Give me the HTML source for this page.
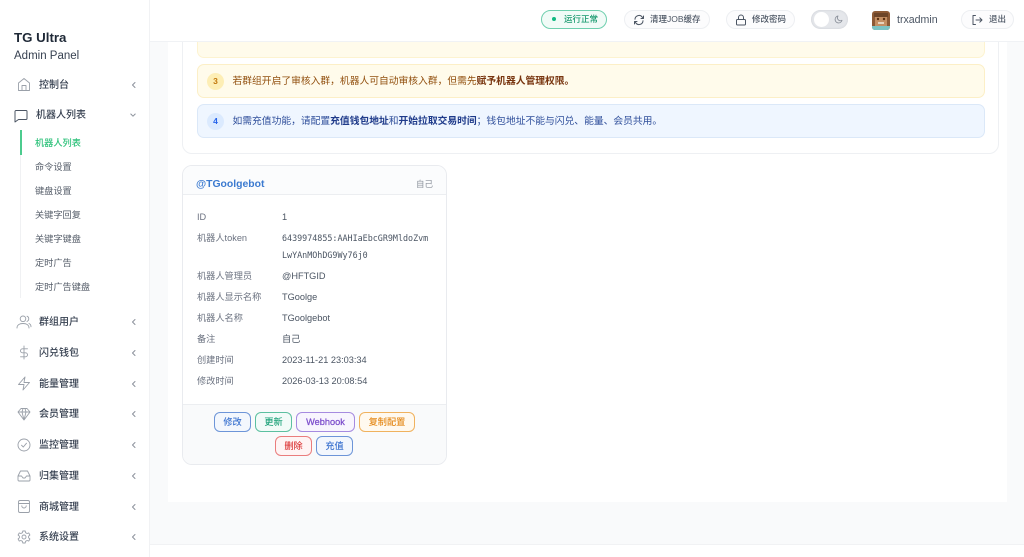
<!DOCTYPE html>
<html lang="zh"><head><meta charset="utf-8"><title>TG Ultra Admin Panel</title>
<style>
*{box-sizing:border-box}
html,body{margin:0;padding:0;width:1024px;height:557px;overflow:hidden;background:#f9fafb}
body{position:relative;font-family:"Liberation Sans","Noto Sans CJK SC",sans-serif;color:#374151;filter:blur(.3px)}
.a{position:absolute;white-space:nowrap}
svg{position:absolute;fill:none;stroke-linecap:round;stroke-linejoin:round}
.m{position:absolute;left:39px;font-size:10px;font-weight:500;color:#374151;line-height:14px;white-space:nowrap}
.s{position:absolute;left:35px;font-size:9.2px;color:#555d69;line-height:14px;white-space:nowrap}
.ch{position:absolute;left:131px;width:6px;height:8px}
.pill{position:absolute;top:10px;height:19px;border:1px solid #edeff2;border-radius:10px;background:#fcfcfd;font-size:8.5px;font-weight:500;color:#4b5563;line-height:17px;white-space:nowrap}
.k{position:absolute;left:197px;font-size:9.2px;color:#6b7280;line-height:14px;white-space:nowrap}
.v{position:absolute;left:282px;font-size:9.2px;color:#4b5563;line-height:14px;white-space:nowrap}
.t{font-family:"DejaVu Sans Mono",monospace;font-size:8.4px}
.b{position:absolute;height:20px;border-radius:6px;border:1.3px solid;font-size:9.2px;font-weight:500;line-height:18.5px;text-align:center;white-space:nowrap}
.note{position:absolute;left:197px;width:788px;height:34px;border-radius:7px;font-size:9.78px;line-height:34px;white-space:nowrap;padding-left:34.5px}
.n{position:absolute;left:9px;top:8px;width:17px;height:17px;border-radius:50%;font-size:8.5px;font-weight:700;line-height:17px;text-align:center}
</style></head><body>

<!-- main surfaces -->
<div class="a" style="left:168px;top:42px;width:839px;height:460px;background:#fff"></div>
<div class="a" style="left:182px;top:30px;width:817px;height:124px;background:#fff;border:1px solid #eef0f3;border-radius:10px"></div>
<div class="a" style="left:197px;top:30px;width:788px;height:28px;background:#fffbeb;border:1px solid #fdf3d0;border-radius:7px"></div>
<div class="a" style="left:150px;top:544px;width:874px;height:13px;background:#fff;border-top:1px solid #f1f2f4"></div>

<!-- notes -->
<div class="note" style="top:64px;background:#fffbeb;border:1px solid #fcefc7;color:#92500f">
<span class="n" style="background:#fdeeb5;color:#c2780c">3</span>若群组开启了审核入群，机器人可自动审核入群，但需先<b style="color:#78350f">赋予机器人管理权限。</b></div>
<div class="note" style="top:104px;background:#eff6ff;border:1px solid #dbe8f8;color:#2f4f9b">
<span class="n" style="background:#dbeafe;color:#2563eb">4</span>如需充值功能，请配置<b style="color:#1e3a8a">充值钱包地址</b>和<b style="color:#1e3a8a">开始拉取交易时间</b>；钱包地址不能与闪兑、能量、会员共用。</div>

<!-- header -->
<div class="a" style="left:150px;top:0;width:874px;height:42px;background:#fff;border-bottom:1px solid #f0f2f5"></div>
<div class="pill" style="left:541px;width:66px;border-color:#6fcfae;background:#f1fbf7;color:#15986c;padding-left:22px"><span class="a" style="left:10px;top:6px;width:4px;height:4px;border-radius:50%;background:#10b981"></span>运行正常</div>
<div class="pill" style="left:624px;width:86px;padding-left:25px">清理JOB缓存
<svg style="left:8px;top:3px" width="12" height="12" viewBox="0 0 12 12" stroke="#4b5563" stroke-width="1"><path d="M2 5.2A4 4 0 0 1 9.3 3.2L10.5 4.5M10.5 2v2.5H8M10 6.8A4 4 0 0 1 2.7 8.8L1.5 7.5M1.5 10V7.5H4"/></svg></div>
<div class="pill" style="left:726px;width:69px;padding-left:25px">修改密码
<svg style="left:8px;top:3px" width="12" height="12" viewBox="0 0 12 12" stroke="#4b5563" stroke-width="1"><rect x="1.5" y="5.5" width="9" height="5.5" rx="1"/><path d="M3.5 5.5V3.5a2.5 2.5 0 0 1 5 0v2"/></svg></div>
<div class="a" style="left:811px;top:10px;width:37px;height:19px;border-radius:10px;background:#e5e7eb;box-shadow:inset 0 0 2px #c9ccd2"></div>
<div class="a" style="left:814px;top:12px;width:15px;height:15px;border-radius:50%;background:#fff"></div>
<svg style="left:834px;top:15px" width="9" height="9" viewBox="0 0 9 9" stroke="#8b919b" stroke-width=".9"><path d="M4 1A3.5 3.5 0 1 0 8 5.3 3 3 0 0 1 4 1Z"/></svg>
<!-- avatar -->
<svg style="left:872px;top:11px;border-radius:3px" width="18" height="19" viewBox="0 0 18 19"><rect width="18" height="19" fill="#8d5a35"/><rect y="15" width="18" height="4" fill="#7cc4c4"/><rect x="3" y="5" width="12" height="10" fill="#c48f63"/><rect x="2" y="2" width="14" height="4" fill="#6d4528"/><circle cx="6" cy="8" r="1.2" fill="#5a3010"/><circle cx="12" cy="8" r="1.2" fill="#5a3010"/><rect x="6" y="11" width="6" height="2" fill="#e8d4bd"/></svg>
<div class="a" style="left:897px;top:13px;font-size:10.6px;font-weight:500;color:#4b5563;line-height:14px">trxadmin</div>
<div class="pill" style="left:961px;width:53px;padding-left:27px">退出
<svg style="left:9px;top:3px" width="12" height="12" viewBox="0 0 12 12" stroke="#4b5563" stroke-width="1"><path d="M4.5 1.5H2v9h2.5M5 6h6M8.8 3.8 11 6 8.8 8.2"/></svg></div>

<!-- sidebar -->
<div class="a" style="left:0;top:0;width:150px;height:557px;background:#fff;border-right:1px solid #f1f2f4"></div>
<div class="a" style="left:14px;top:29px;font-size:13.3px;font-weight:700;color:#1f2937;line-height:17px">TG Ultra</div>
<div class="a" style="left:14px;top:49px;font-size:11.5px;color:#374151;line-height:15px">Admin Panel</div>

<svg style="left:17px;top:77px" width="14" height="15" viewBox="0 0 14 15" stroke="#9aa0a9" stroke-width=".9"><path d="M1.5 6 7 1.5 12.5 6v7.500h-11ZM5 13.5V8.5h4v5"/></svg>
<div class="m" style="top:79px">控制台</div>
<svg class="ch" style="top:81px" viewBox="0 0 6 8" stroke="#8b919b"><path d="M4 1.5 1.500 4 4 6.500"/></svg>

<svg style="left:14px;top:109px" width="14" height="14" viewBox="0 0 14 14" stroke="#4b5563" stroke-width="1"><path d="M2 1.5h10a1 1 0 0 1 1 1v7a1 1 0 0 1-1 1H4.500L1 13V2.500a1 1 0 0 1 1-1Z"/></svg>
<div class="m" style="top:109px;left:36px">机器人列表</div>
<svg class="ch" style="left:130px;top:111px" viewBox="0 0 6 8" stroke="#8b919b"><path d="M.8 3 3 5.2 5.2 3"/></svg>

<div class="a" style="left:20px;top:130px;width:1px;height:168px;background:#f0f1f3"></div>
<div class="a" style="left:20px;top:130px;width:2px;height:25px;background:#4ccb8e"></div>
<div class="s" style="top:136px;color:#2fc27b;font-weight:500">机器人列表</div>
<div class="s" style="top:160px">命令设置</div>
<div class="s" style="top:184px">键盘设置</div>
<div class="s" style="top:208px">关键字回复</div>
<div class="s" style="top:232px">关键字键盘</div>
<div class="s" style="top:256px">定时广告</div>
<div class="s" style="top:280px">定时广告键盘</div>

<svg style="left:16px;top:315px" width="16" height="14" viewBox="0 0 16 14" stroke="#9aa0a9" stroke-width=".9"><circle cx="7" cy="3.8" r="2.8"/><path d="M1 13c0-3 2.5-4.500 6-4.500s6 1.500 6 4.500M11 1.200a2.800 2.800 0 0 1 0 5.200M13 8.500c1.300.6 2 1.800 2 3.200"/></svg>
<div class="m" style="top:316px">群组用户</div>
<svg class="ch" style="top:318px" viewBox="0 0 6 8" stroke="#8b919b"><path d="M4 1.5 1.500 4 4 6.500"/></svg>

<svg style="left:17px;top:345px" width="14" height="15" viewBox="0 0 14 15" stroke="#9aa0a9" stroke-width=".9"><path d="M7 1v13M10.500 3.800H5.500a2 2 0 0 0 0 4h3a2 2 0 0 1 0 4H3.500"/></svg>
<div class="m" style="top:347px">闪兑钱包</div>
<svg class="ch" style="top:349px" viewBox="0 0 6 8" stroke="#8b919b"><path d="M4 1.5 1.500 4 4 6.500"/></svg>

<svg style="left:17px;top:376px" width="14" height="15" viewBox="0 0 14 15" stroke="#9aa0a9" stroke-width=".9"><path d="M8 1 1.500 8.500H7L6 14l6.500-7.500H7Z"/></svg>
<div class="m" style="top:378px">能量管理</div>
<svg class="ch" style="top:380px" viewBox="0 0 6 8" stroke="#8b919b"><path d="M4 1.5 1.500 4 4 6.500"/></svg>

<svg style="left:17px;top:407px" width="14" height="14" viewBox="0 0 14 14" stroke="#9aa0a9" stroke-width=".9"><path d="M4 1.500h6L13 5 7 13 1 5ZM1 5h12M5 5l2 8 2-8M5 5l1-3.500M9 5 8 1.500"/></svg>
<div class="m" style="top:408px">会员管理</div>
<svg class="ch" style="top:410px" viewBox="0 0 6 8" stroke="#8b919b"><path d="M4 1.5 1.500 4 4 6.500"/></svg>

<svg style="left:17px;top:438px" width="14" height="14" viewBox="0 0 14 14" stroke="#9aa0a9" stroke-width=".9"><circle cx="7" cy="7" r="6"/><path d="M4.500 7.200 6.300 9 9.500 5.200"/></svg>
<div class="m" style="top:439px">监控管理</div>
<svg class="ch" style="top:441px" viewBox="0 0 6 8" stroke="#8b919b"><path d="M4 1.5 1.500 4 4 6.500"/></svg>

<svg style="left:17px;top:469px" width="14" height="14" viewBox="0 0 14 14" stroke="#9aa0a9" stroke-width=".9"><path d="M3.500 2h7L13 7v4a1 1 0 0 1-1 1H2a1 1 0 0 1-1-1V7ZM1 7h3.500L6 9h2l1.500-2H13"/></svg>
<div class="m" style="top:470px">归集管理</div>
<svg class="ch" style="top:472px" viewBox="0 0 6 8" stroke="#8b919b"><path d="M4 1.5 1.500 4 4 6.500"/></svg>

<svg style="left:17px;top:499px" width="14" height="15" viewBox="0 0 14 15" stroke="#9aa0a9" stroke-width=".9"><rect x="1.500" y="1.500" width="11" height="12" rx="1.500"/><path d="M1.500 4.500h11M4.800 6.800a2.200 2.200 0 0 0 4.400 0"/></svg>
<div class="m" style="top:501px">商城管理</div>
<svg class="ch" style="top:503px" viewBox="0 0 6 8" stroke="#8b919b"><path d="M4 1.5 1.500 4 4 6.500"/></svg>

<svg style="left:17px;top:530px" width="14" height="14" viewBox="0 0 14 14" stroke="#9aa0a9" stroke-width=".9"><path d="M5.800 1h2.400l.4 1.700 1.500.8 1.600-.6 1.200 2.100-1.300 1.200v1.600l1.300 1.200-1.200 2.100-1.600-.6-1.500.8L8.200 13H5.800l-.4-1.700-1.500-.8-1.600.6-1.200-2.100 1.300-1.200V6.200L1.100 5l1.200-2.100 1.600.6 1.500-.8Z"/><circle cx="7" cy="7" r="2"/></svg>
<div class="m" style="top:531px">系统设置</div>
<svg class="ch" style="top:533px" viewBox="0 0 6 8" stroke="#8b919b"><path d="M4 1.5 1.500 4 4 6.500"/></svg>

<!-- bot card -->
<div class="a" style="left:182px;top:165px;width:265px;height:300px;background:#fff;border:1px solid #e9ebef;border-radius:10px;overflow:hidden">
 <div class="a" style="left:0;top:0;width:263px;height:29px;background:#fbfcfd;border-bottom:1px solid #eceef1"></div>
 <div class="a" style="left:0;top:238px;width:263px;height:60px;background:#f9fafb;border-top:1px solid #eceef1"></div>
</div>
<div class="a" style="left:196px;top:178px;font-size:10.4px;font-weight:700;color:#3b7ad0;line-height:14px">@TGoolgebot</div>
<div class="a" style="left:416px;top:177px;font-size:8.5px;color:#8b919b;line-height:14px">自己</div>

<div class="k" style="top:210px">ID</div><div class="v" style="top:210px">1</div>
<div class="k" style="top:231px">机器人token</div>
<div class="v t" style="top:231px">6439974855:AAHIaEbcGR9MldoZvm</div>
<div class="v t" style="top:248px">LwYAnMOhDG9Wy76j0</div>
<div class="k" style="top:269px">机器人管理员</div><div class="v" style="top:269px">@HFTGID</div>
<div class="k" style="top:290px">机器人显示名称</div><div class="v" style="top:290px">TGoolge</div>
<div class="k" style="top:311px">机器人名称</div><div class="v" style="top:311px">TGoolgebot</div>
<div class="k" style="top:332px">备注</div><div class="v" style="top:332px">自己</div>
<div class="k" style="top:353px">创建时间</div><div class="v" style="top:353px">2023-11-21 23:03:34</div>
<div class="k" style="top:374px">修改时间</div><div class="v" style="top:374px">2026-03-13 20:08:54</div>

<div class="b" style="left:214px;top:412px;width:37px;border-color:#6d95d8;background:#f3f7fd;color:#3a72cf">修改</div>
<div class="b" style="left:255px;top:412px;width:37px;border-color:#5cc0a0;background:#f2fbf8;color:#1fa37a">更新</div>
<div class="b" style="left:296px;top:412px;width:59px;border-color:#a68be0;background:#f8f5fe;color:#7c4dcc;-webkit-text-stroke:.25px #7c4dcc">Webhook</div>
<div class="b" style="left:359px;top:412px;width:56px;border-color:#f0b25e;background:#fff9ef;color:#e58a1a">复制配置</div>
<div class="b" style="left:275px;top:436px;width:37px;border-color:#ea7d7d;background:#fef4f4;color:#dc3838">删除</div>
<div class="b" style="left:316px;top:436px;width:37px;border-color:#6d95d8;background:#f3f7fd;color:#3a72cf">充值</div>

</body></html>
